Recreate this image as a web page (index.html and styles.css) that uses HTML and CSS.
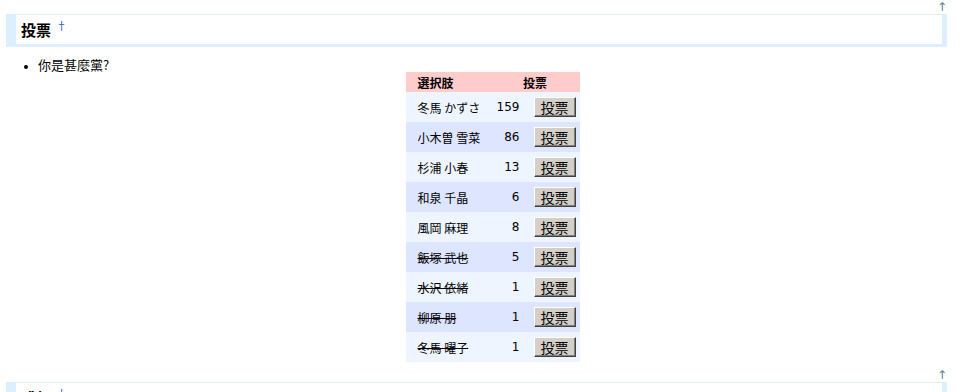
FILE: index.html
```
<!DOCTYPE html>
<html lang="ja">
<head>
<meta charset="utf-8">
<title>投票</title>
<link rel="stylesheet" href="styles.css">
</head>
<body>
<div class="page">
  <div class="jumpmenu"><a href="#top">↑</a></div>
  <h3 class="heading">投票<a class="anchor" href="#vote">†</a></h3>
  <ul class="list">
    <li>
      <div class="question">你是甚麼黨?</div>
      <table class="vote">
        <tr>
          <td class="label name-cell"><strong>選択肢</strong></td>
          <td class="label" colspan="2"><strong>投票</strong></td>
        </tr>
        <tr class="light"><td class="name-cell">冬馬 かずさ</td><td class="count">159</td><td class="btn-cell"><button class="btn">投票</button></td></tr>
        <tr class="dark"><td class="name-cell">小木曽 雪菜</td><td class="count">86</td><td class="btn-cell"><button class="btn">投票</button></td></tr>
        <tr class="light"><td class="name-cell">杉浦 小春</td><td class="count">13</td><td class="btn-cell"><button class="btn">投票</button></td></tr>
        <tr class="dark"><td class="name-cell">和泉 千晶</td><td class="count">6</td><td class="btn-cell"><button class="btn">投票</button></td></tr>
        <tr class="light"><td class="name-cell">風岡 麻理</td><td class="count">8</td><td class="btn-cell"><button class="btn">投票</button></td></tr>
        <tr class="dark"><td class="name-cell"><s>飯塚 武也</s></td><td class="count">5</td><td class="btn-cell"><button class="btn">投票</button></td></tr>
        <tr class="light"><td class="name-cell"><s>水沢 依緒</s></td><td class="count">1</td><td class="btn-cell"><button class="btn">投票</button></td></tr>
        <tr class="dark"><td class="name-cell"><s>柳原 朋</s></td><td class="count">1</td><td class="btn-cell"><button class="btn">投票</button></td></tr>
        <tr class="light"><td class="name-cell"><s>冬馬 曜子</s></td><td class="count">1</td><td class="btn-cell"><button class="btn">投票</button></td></tr>
      </table>
    </li>
  </ul>
  <div class="jumpmenu"><a href="#top">↑</a></div>
  <h3 class="heading">感想<a class="anchor" href="#comment">†</a></h3>
</div>
</body>
</html>
```
FILE: styles.css
```
html, body {
  margin: 0;
  padding: 0;
  background: #ffffff;
  color: #000000;
  font-family: "DejaVu Sans", "Noto Sans CJK JP", sans-serif;
  font-size: 12px;
}

.page {
  padding: 0 18px 0 6px;
}

.jumpmenu {
  height: 14px;
  line-height: 15px;
  text-align: right;
  font-size: 12px;
}

.jumpmenu a {
  color: #5a7fa8;
  text-decoration: none;
}

.heading {
  margin: 0;
  height: 29px;
  line-height: 21px;
  padding: 0 5px;
  border-top: 1px solid #ddeeff;
  border-left: 10px solid #ddeeff;
  border-right: 5px solid #ddeeff;
  border-bottom: 3px solid #ddeeff;
  background: #ffffff;
  font-family: "Noto Sans CJK JP", sans-serif;
  font-size: 15px;
  font-weight: bold;
  display: flex;
  align-items: center;
}

.anchor {
  color: #215dc6;
  text-decoration: none;
  font-weight: normal;
  font-size: 11px;
  margin-left: 5px;
  align-self: flex-start;
  line-height: 14px;
  margin-top: 3px;
}

.list {
  margin: 11px 0 6px 0;
  padding-left: 32px;
}

.question {
  line-height: 14px;
  font-size: 13px;
  font-family: "Noto Sans CJK JP", sans-serif;
}

.vote {
  margin: 0 auto;
  border-collapse: collapse;
  border-spacing: 0;
}

.vote td {
  box-sizing: border-box;
  padding: 0;
  height: 30px;
  vertical-align: middle;
  white-space: nowrap;
}

.vote td.label {
  height: 20px;
  background: #ffcccc;
  text-align: center;
  font-family: "Noto Sans CJK JP", sans-serif;
}

.vote td.label.name-cell {
  text-align: left;
}

.name-cell {
  width: 85px;
  padding-left: 12px !important;
  font-family: "Noto Sans CJK JP", sans-serif;
}

.count {
  width: 35px;
  text-align: right;
  padding-right: 6px !important;
}

.btn-cell {
  width: 54px;
  padding-left: 8px !important;
}

.light td {
  background: #eef5ff;
}

.dark td {
  background: #dde5ff;
}

.btn {
  display: block;
  box-sizing: border-box;
  width: 42px;
  height: 20px;
  padding: 0;
  margin: 0;
  background: #d4d0c8;
  color: #000000;
  font-family: "Noto Sans CJK JP", sans-serif;
  font-size: 14px;
  line-height: 16px;
  border: 1px solid;
  border-color: #ffffff #404040 #404040 #ffffff;
  box-shadow: inset -1px -1px 0 #808080;
}
```
